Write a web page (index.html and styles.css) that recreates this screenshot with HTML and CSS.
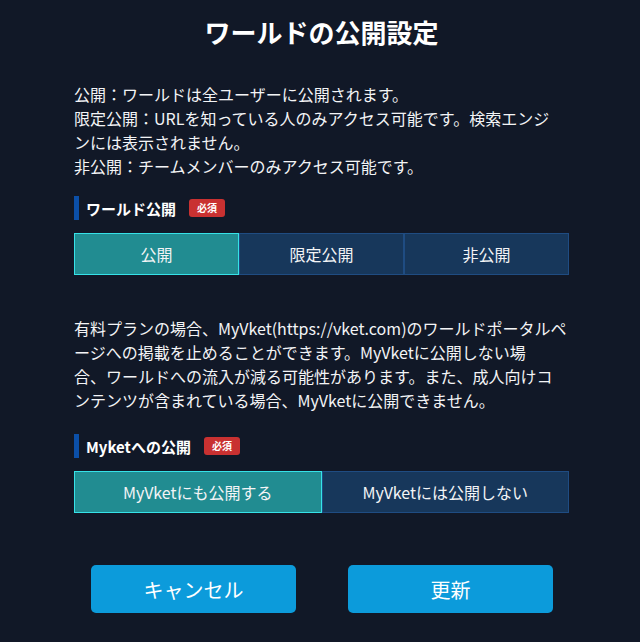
FILE: index.html
```html
<!DOCTYPE html>
<html lang="ja">
<head>
<meta charset="utf-8">
<title>ワールドの公開設定</title>
<link rel="stylesheet" href="styles.css">
</head>
<body>
<div class="dialog">
  <h1 class="title">ワールドの公開設定</h1>
  <div class="desc">
    <p>公開：ワールドは全ユーザーに公開されます。</p>
    <p>限定公開：URLを知っている人のみアクセス可能です。検索エンジ<br>ンには表示されません。</p>
    <p>非公開：チームメンバーのみアクセス可能です。</p>
  </div>
  <div class="field-head">
    <span class="field-label">ワールド公開</span>
    <span class="badge">必須</span>
  </div>
  <div class="toggle toggle-3">
    <button class="opt active">公開</button>
    <button class="opt">限定公開</button>
    <button class="opt">非公開</button>
  </div>
  <p class="desc desc2">有料プランの場合、MyVket(https://vket.com)のワールドポータルペ<br>ージへの掲載を止めることができます。MyVketに公開しない場<br>合、ワールドへの流入が減る可能性があります。また、成人向けコ<br>ンテンツが含まれている場合、MyVketに公開できません。</p>
  <div class="field-head field-head2">
    <span class="field-label">Myketへの公開</span>
    <span class="badge">必須</span>
  </div>
  <div class="toggle toggle-2">
    <button class="opt active">MyVketにも公開する</button>
    <button class="opt">MyVketには公開しない</button>
  </div>
  <div class="actions">
    <button class="btn">キャンセル</button>
    <button class="btn">更新</button>
  </div>
</div>
</body>
</html>
```

FILE: styles.css
```css
* { box-sizing: border-box; }
html, body {
  margin: 0;
  padding: 0;
  background: #111827;
}
body {
  font-family: "Noto Sans CJK JP", "Noto Sans", sans-serif;
  color: #f3f4f6;
}
.dialog {
  width: 640px;
  padding: 14px 71px 0 74px;
}
.title {
  margin: 0;
  font-size: 26px;
  line-height: 36px;
  font-weight: 700;
  text-align: center;
  color: #ffffff;
}
.desc {
  margin-top: 32px;
  font-size: 16px;
  line-height: 24px;
  white-space: nowrap;
}
.desc-first { letter-spacing: 0.3px; }
.desc p { margin: 0; }
.field-head {
  display: flex;
  align-items: center;
  gap: 13px;
  margin-top: 18px;
  height: 24px;
  border-left: 5px solid #0b4fa8;
  padding-left: 7px;
}
.field-label {
  font-size: 15px;
  font-weight: 700;
  color: #ffffff;
  line-height: 19px;
}
.badge {
  display: inline-flex;
  align-items: center;
  justify-content: center;
  width: 36px;
  height: 18px;
  border-radius: 3px;
  background: #c93131;
  color: #fff;
  font-size: 10px;
  font-weight: 700;
  line-height: 1;
}
.toggle {
  display: grid;
  margin-top: 13px;
  height: 42px;
}
.toggle-3 { grid-template-columns: repeat(3, 1fr); }
.toggle-2 { grid-template-columns: repeat(2, 1fr); margin-top: 13px; }
.opt {
  font-family: inherit;
  font-size: 16px;
  color: #f3f4f6;
  background: #17375b;
  border: 1px solid #1f4c82;
  margin: 0;
  padding: 0;
  cursor: pointer;
}
.opt.active {
  background: #218c91;
  border-color: #36e2e8;
}
.desc2 {
  margin: 41px 0 0;
}
.field-head2 { margin-top: 22px; }
.actions {
  display: flex;
  justify-content: center;
  gap: 52px;
  margin-top: 52px;
  padding-left: 1px;
}
.btn {
  width: 205px;
  height: 48px;
  border: none;
  border-radius: 5px;
  background: #0c9bdb;
  color: #ffffff;
  font-family: inherit;
  font-size: 20px;
  cursor: pointer;
}
```
